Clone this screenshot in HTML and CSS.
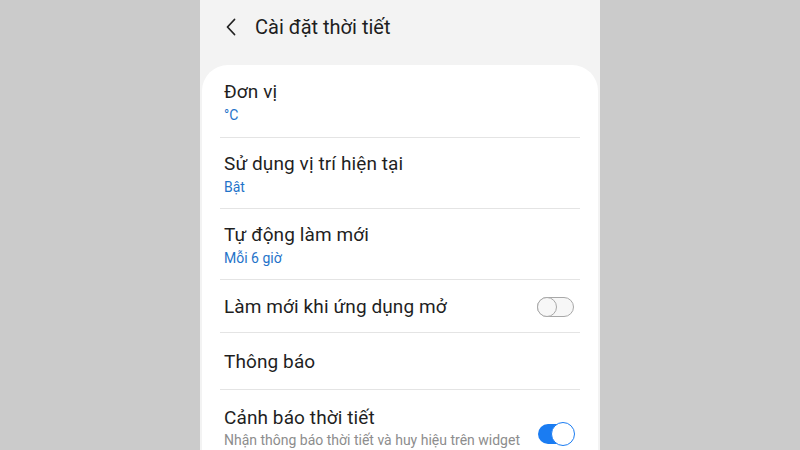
FILE: index.html
```html
<!DOCTYPE html>
<html lang="vi">
<head>
<meta charset="utf-8">
<title>Cài đặt thời tiết</title>
<link rel="stylesheet" href="styles.css">
</head>
<body>
<div class="phone">
  <header class="header">
    <svg class="back" width="12" height="18" viewBox="0 0 12 18"><path d="M9.5 1.5 L2.5 9 L9.5 16.5" fill="none" stroke="#222" stroke-width="1.8" stroke-linecap="round" stroke-linejoin="round"/></svg>
    <h1 class="title">Cài đặt thời tiết</h1>
  </header>
  <main class="card">
    <div class="row r-first">
      <div class="text">
        <div class="label">Đơn vị</div>
        <div class="value">°C</div>
      </div>
    </div>
    <div class="row r-tall">
      <div class="text">
        <div class="label">Sử dụng vị trí hiện tại</div>
        <div class="value">Bật</div>
      </div>
    </div>
    <div class="row r-tall">
      <div class="text">
        <div class="label">Tự động làm mới</div>
        <div class="value">Mỗi 6 giờ</div>
      </div>
    </div>
    <div class="row r-single">
      <div class="text">
        <div class="label">Làm mới khi ứng dụng mở</div>
      </div>
      <span class="toggle off"><span class="knob"></span></span>
    </div>
    <div class="row r-single2">
      <div class="text">
        <div class="label">Thông báo</div>
      </div>
    </div>
    <div class="row r-last">
      <div class="text">
        <div class="label">Cảnh báo thời tiết</div>
        <div class="desc">Nhận thông báo thời tiết và huy hiệu trên widget và ứng dụng</div>
      </div>
      <span class="toggle on"><span class="knob"></span></span>
    </div>
  </main>
</div>
</body>
</html>
```
FILE: styles.css
```css
html, body {
  margin: 0;
  padding: 0;
  height: 100%;
  overflow: hidden;
}
body {
  background: #cbcbcb;
  font-family: Roboto, "Noto Sans", sans-serif;
}
.phone {
  width: 400px;
  height: 450px;
  margin: 0 auto;
  background: #f3f3f3;
  overflow: hidden;
}
.header {
  height: 65px;
  display: flex;
  align-items: flex-start;
  padding: 16px 0 0 25px;
  box-sizing: border-box;
}
.back {
  margin-top: 2px;
  display: block;
}
.title {
  margin: 0 0 0 18px;
  font-size: 20px;
  font-weight: 400;
  color: #1e1e1e;
  line-height: 22px;
}
.card {
  margin: 0 2px;
  background: #ffffff;
  border-radius: 26px 26px 0 0;
  padding: 0 18px;
  height: 385px;
  box-sizing: border-box;
}
.row {
  display: flex;
  align-items: center;
  justify-content: space-between;
  padding: 0 6px 0 4px;
  border-top: 1px solid #e4e4e4;
  box-sizing: border-box;
}
.r-first { border-top: none; height: 72px; padding-top: 1px; }
.r-tall { height: 71px; padding-top: 2px; }
.r-single { height: 53px; padding-top: 2px; }
.r-single2 { height: 57px; padding-top: 2px; }
.r-last { align-items: flex-start; padding-top: 16px; }
.text { min-width: 0; }
.label {
  font-size: 19px;
  letter-spacing: 0.1px;
  line-height: 24px;
  color: #1f1f1f;
}
.value {
  font-size: 14px;
  line-height: 18px;
  color: #1f73c9;
  margin-top: 2px;
}
.desc {
  font-size: 14px;
  line-height: 19px;
  color: #8d8d8d;
  margin-top: 1px;
  width: 310px;
}
.toggle {
  position: relative;
  flex: none;
  width: 37px;
  height: 20px;
  border-radius: 10px;
  box-sizing: border-box;
}
.toggle.off {
  border: 1.5px solid #a8a8a8;
  background: #f7f7f7;
}
.toggle.off .knob {
  position: absolute;
  left: -1.5px;
  top: -1.5px;
  width: 20px;
  height: 20px;
  border-radius: 50%;
  border: 1.5px solid #a8a8a8;
  background: #f7f7f7;
  box-sizing: border-box;
}
.toggle.on {
  background: #1a7cf2;
  margin-top: 18px;
  width: 36px;
}
.toggle.on .knob {
  position: absolute;
  right: -1px;
  top: -2px;
  width: 24px;
  height: 24px;
  border-radius: 50%;
  border: 1.5px solid #1a7cf2;
  background: #ffffff;
  box-sizing: border-box;
}
```
